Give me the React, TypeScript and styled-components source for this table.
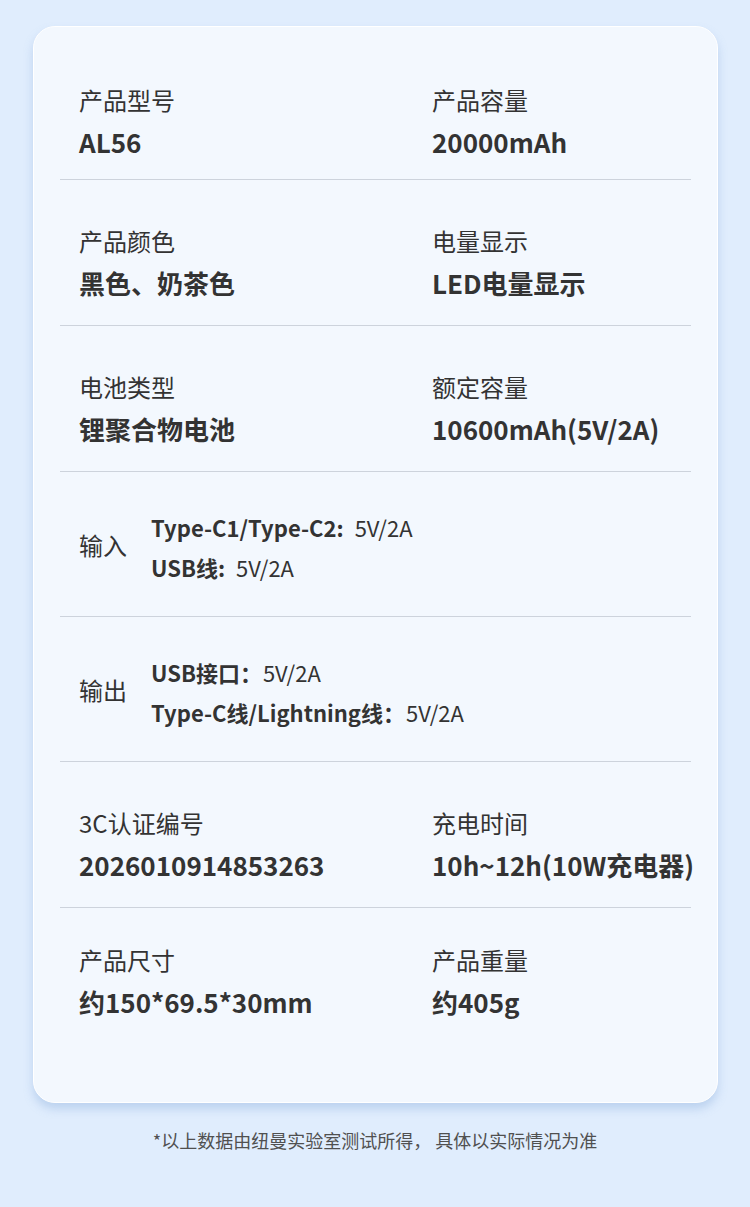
import styled, { createGlobalStyle } from "styled-components";

const GlobalStyle = createGlobalStyle`
    html, body {
        margin: 0;
        padding: 0;
        background: #e0edfd;
    }
    body {
        font-family: "Noto Sans CJK SC", "Noto Sans", sans-serif;
        color: #333333;
    }
`;

interface IPair {
    label: string;
    value: string;
}

interface ISpecLine {
    key: string;
    value: string;
    gap: number;
}

const pairRows: IPair[][] = [
    [{ label: "产品型号", value: "AL56" }, { label: "产品容量", value: "20000mAh" }],
    [{ label: "产品颜色", value: "黑色、奶茶色" }, { label: "电量显示", value: "LED电量显示" }],
    [{ label: "电池类型", value: "锂聚合物电池" }, { label: "额定容量", value: "10600mAh(5V/2A)" }],
];

const specRows: { label: string; lines: ISpecLine[] }[] = [
    {
        label: "输入",
        lines: [
            { key: "Type-C1/Type-C2:", value: "5V/2A", gap: 11 },
            { key: "USB线:", value: "5V/2A", gap: 11 },
        ],
    },
    {
        label: "输出",
        lines: [
            { key: "USB接口：", value: "5V/2A", gap: 1 },
            { key: "Type-C线/Lightning线：", value: "5V/2A", gap: 1 },
        ],
    },
];

const bottomRows: IPair[][] = [
    [{ label: "3C认证编号", value: "2026010914853263" }, { label: "充电时间", value: "10h~12h(10W充电器)" }],
    [{ label: "产品尺寸", value: "约150*69.5*30mm" }, { label: "产品重量", value: "约405g" }],
];

export default function App() {
    const renderPairs = (row: IPair[], i: number) => (
        <PairRow key={i}>
            {row.map((cell) => (
                <Cell key={cell.label}>
                    <Label>{cell.label}</Label>
                    <Value>{cell.value}</Value>
                </Cell>
            ))}
        </PairRow>
    );

    return (
        <>
            <GlobalStyle />
            <Page>
                <Card>
                    {pairRows.map(renderPairs)}
                    {specRows.map((row) => (
                        <SpecRow key={row.label}>
                            <SpecLabel>{row.label}</SpecLabel>
                            <SpecLines>
                                {row.lines.map((line) => (
                                    <SpecLine key={line.key}>
                                        <SpecKey>{line.key}</SpecKey>
                                        <SpecValue $gap={line.gap}>{line.value}</SpecValue>
                                    </SpecLine>
                                ))}
                            </SpecLines>
                        </SpecRow>
                    ))}
                    {bottomRows.map(renderPairs)}
                </Card>
                <Footnote>*以上数据由纽曼实验室测试所得， 具体以实际情况为准</Footnote>
            </Page>
        </>
    );
}

const Page = styled.div`
    width: 750px;
    height: 1207px;
    box-sizing: border-box;
    padding-top: 26px;
    display: flex;
    flex-direction: column;
    align-items: center;
`;

const Card = styled.div`
    width: 685px;
    box-sizing: border-box;
    margin-left: 1px;
    padding: 58px 26px 0;
    background: #f3f8fe;
    border: 1px solid #ffffff;
    border-radius: 22px;
    box-shadow: 0 6px 10px rgba(120, 160, 215, 0.35);
`;

const RowBase = styled.div`
    padding: 46px 19px 25px;
    border-bottom: 1px solid #cdd3dc;

    &:first-child {
        padding-top: 0;
        padding-bottom: 20px;
    }

    &:last-child {
        padding-top: 37px;
        padding-bottom: 83px;
        border-bottom: none;
    }
`;

const PairRow = styled(RowBase)`
    display: grid;
    grid-template-columns: 353px 1fr;
`;

const Cell = styled.div`
    display: flex;
    flex-direction: column;
    white-space: nowrap;
`;

const Label = styled.div`
    font-size: 24px;
    line-height: 30px;
    color: #333333;
`;

const Value = styled.div`
    margin-top: 10px;
    font-size: 26px;
    line-height: 34px;
    font-weight: 700;
    color: #333333;
`;

const SpecRow = styled(RowBase)`
    display: flex;
    align-items: center;
    padding-top: 40px;
    padding-bottom: 34px;
`;

const SpecLabel = styled.div`
    width: 72px;
    flex-shrink: 0;
    margin-top: -4px;
    font-size: 24px;
    line-height: 30px;
`;

const SpecLines = styled.div`
    display: flex;
    flex-direction: column;
    gap: 10px;
`;

const SpecLine = styled.div`
    font-size: 22px;
    line-height: 30px;
    white-space: nowrap;
    color: #333333;
`;

const SpecKey = styled.span`
    font-weight: 700;
`;

const SpecValue = styled.span<{ $gap: number }>`
    margin-left: ${(p) => p.$gap}px;
`;

const Footnote = styled.div`
    margin-top: 24px;
    font-size: 18px;
    line-height: 26px;
    color: #505050;
    white-space: pre;
`;
